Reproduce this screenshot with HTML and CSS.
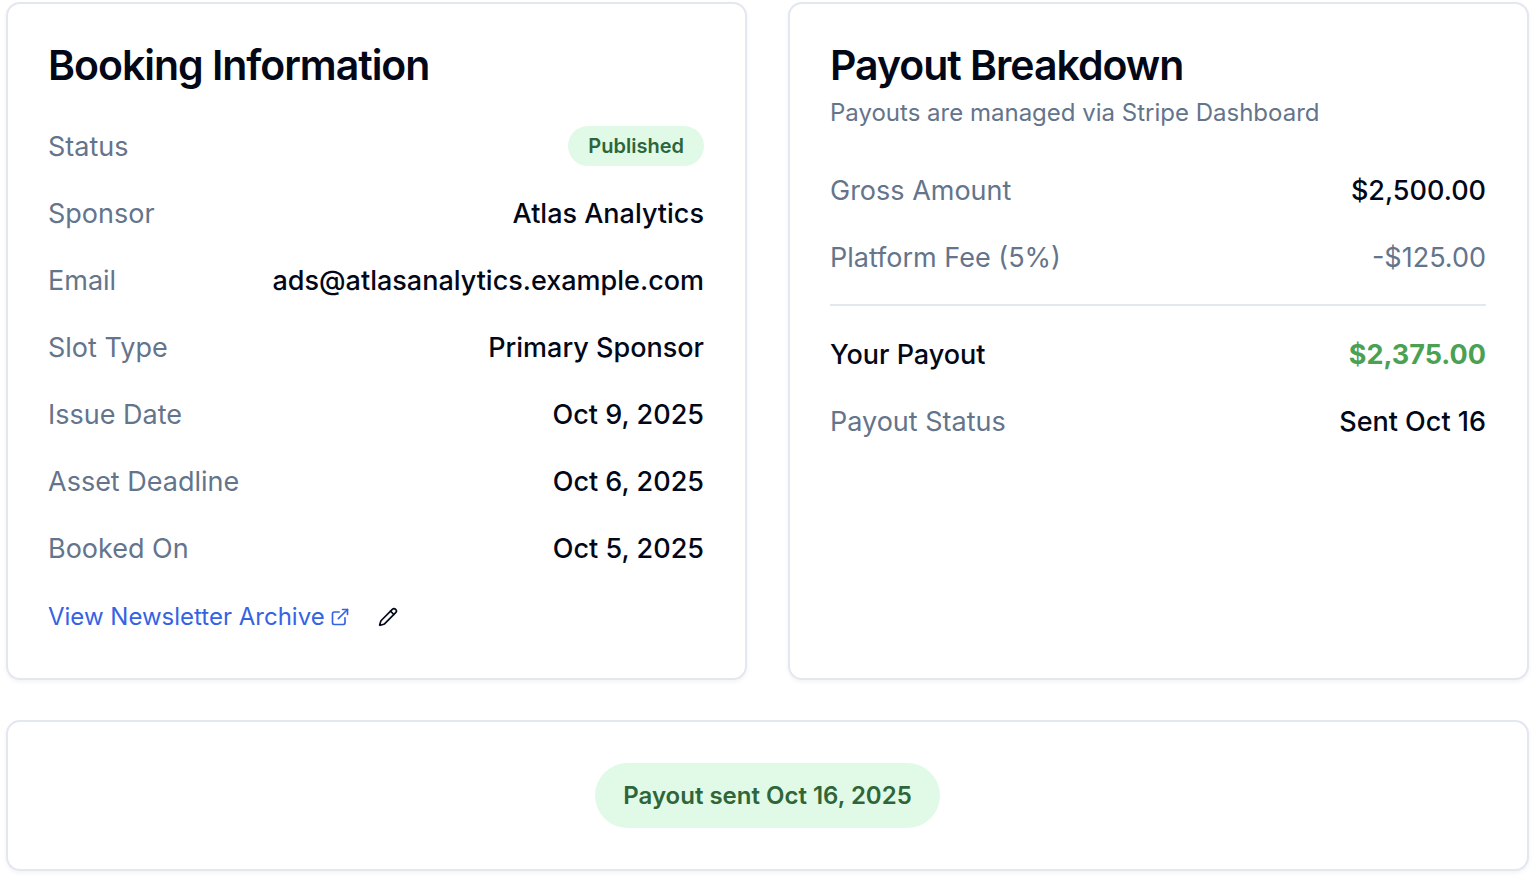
FILE: index.html
```html
<!DOCTYPE html>
<html lang="en">
<head>
    <meta charset="UTF-8">
    <meta name="viewport" content="width=device-width, initial-scale=1.0">
    <title>Booking Details</title>
    <link rel="stylesheet" href="styles.css">
</head>
<body>
    <main>
        <div class="cards">
            <section class="card">
                <h2>Booking Information</h2>
                <dl class="rows">
                    <div class="row"><dt>Status</dt><dd><span class="badge">Published</span></dd></div>
                    <div class="row"><dt>Sponsor</dt><dd>Atlas Analytics</dd></div>
                    <div class="row"><dt>Email</dt><dd>ads@atlasanalytics.example.com</dd></div>
                    <div class="row"><dt>Slot Type</dt><dd>Primary Sponsor</dd></div>
                    <div class="row"><dt>Issue Date</dt><dd>Oct 9, 2025</dd></div>
                    <div class="row"><dt>Asset Deadline</dt><dd>Oct 6, 2025</dd></div>
                    <div class="row"><dt>Booked On</dt><dd>Oct 5, 2025</dd></div>
                </dl>
                <div class="archive">
                    <a href="#">View Newsletter Archive
                        <svg class="icon" viewBox="0 0 24 24"><path d="M15 3h6v6"/><path d="M10 14 21 3"/><path d="M18 13v6a2 2 0 0 1-2 2H5a2 2 0 0 1-2-2V8a2 2 0 0 1 2-2h6"/></svg>
                    </a>
                    <button type="button" aria-label="Edit archive link">
                        <svg class="icon" viewBox="0 0 24 24"><path d="M21.174 6.812a1 1 0 0 0-3.986-3.987L3.842 16.174a2 2 0 0 0-.5.83l-1.321 4.352a.5.5 0 0 0 .623.622l4.353-1.32a2 2 0 0 0 .83-.497z"/><path d="m15 5 4 4"/></svg>
                    </button>
                </div>
            </section>

            <section class="card">
                <h2>Payout Breakdown</h2>
                <p class="description">Payouts are managed via Stripe Dashboard</p>
                <dl class="rows">
                    <div class="row"><dt>Gross Amount</dt><dd>$2,500.00</dd></div>
                    <div class="row"><dt>Platform Fee (5%)</dt><dd class="fee">-$125.00</dd></div>
                    <div class="row total"><dt>Your Payout</dt><dd>$2,375.00</dd></div>
                    <div class="row"><dt>Payout Status</dt><dd>Sent Oct 16</dd></div>
                </dl>
            </section>
        </div>

        <section class="card notice">
            <span class="badge badge-large">Payout sent Oct 16, 2025</span>
        </section>
    </main>
</body>
</html>
```
FILE: styles.css
```css
* { box-sizing: border-box; }
body { margin: 0; background: #fff; color: #020817; font-family: Inter, sans-serif; font-size: 27px; line-height: 42px; }
main { display: grid; gap: 40px; padding: 2px 9px 7px 6px; }
h2, p, dl, dd { margin: 0; }

.cards { display: grid; grid-template-columns: 1fr 1fr; gap: 41px; }
.card { padding: 40px 41px 40px 40px; background: #fff; border: 2px solid #e2e8f0; border-radius: 14px; box-shadow: 0 2px 4px rgba(0, 0, 0, 0.05); }
.card h2 { font-size: 41px; line-height: 42px; font-weight: 600; letter-spacing: -0.025em; }
.description { margin-top: 10px; font-size: 24px; line-height: 34px; color: #64748b; }

.rows { display: flex; flex-direction: column; gap: 25px; margin-top: 40px; }
.row { display: flex; justify-content: space-between; }
.row dt { color: #64748b; }
.row dd { display: flex; align-items: flex-start; font-weight: 500; }
.row .fee { font-weight: 400; color: #64748b; }
.total { padding-top: 28px; border-top: 2px solid #e2e8f0; }
.row.total dt { color: #020817; font-weight: 500; }
.total dd { font-weight: 700; color: #4aa154; }
.row.total dd { font-weight: 700; }

.badge { padding: 0 20px; border-radius: 40px; background: #e1fae7; color: #2f6639; font-size: 20px; line-height: 40px; font-weight: 600; }
.badge-large { padding: 0 28px; font-size: 24px; line-height: 65px; }

.archive { display: flex; align-items: center; gap: 18px; margin-top: 25px; }
.archive a { display: flex; align-items: center; gap: 5px; color: #3563e4; font-size: 24px; text-decoration: none; }
.archive button { display: flex; align-items: center; justify-content: center; height: 43px; padding: 0 10px; border: none; background: none; color: #020817; cursor: pointer; }
.icon { width: 20px; height: 20px; fill: none; stroke: currentColor; stroke-width: 2; stroke-linecap: round; stroke-linejoin: round; }

.notice { display: flex; justify-content: center; padding: 41px; }
```
